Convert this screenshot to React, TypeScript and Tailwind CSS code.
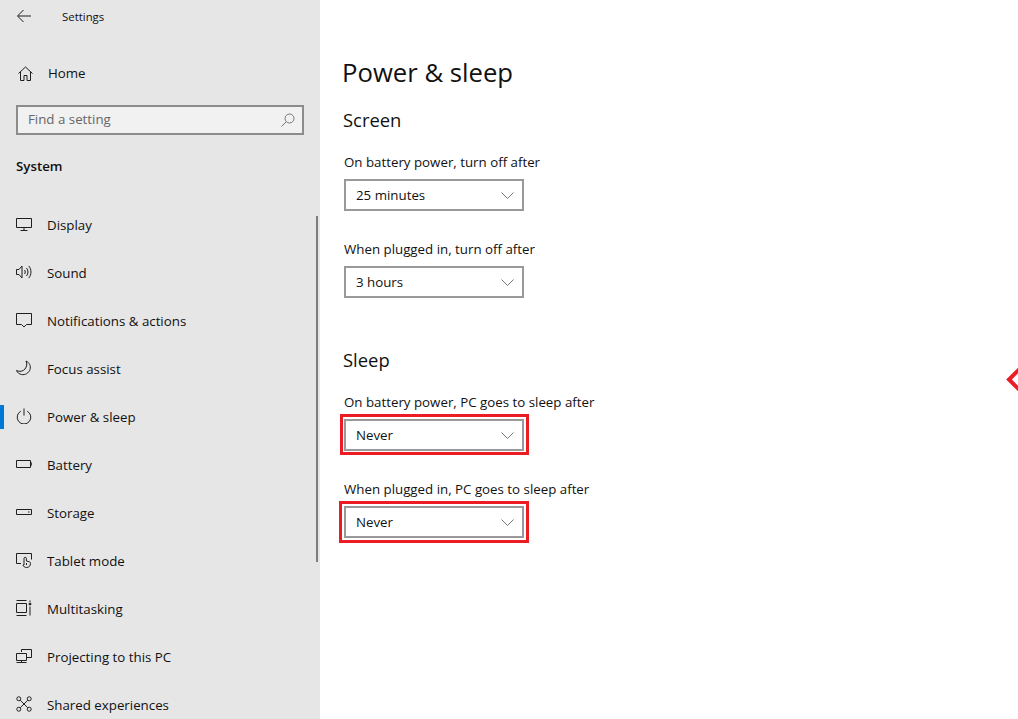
import React from 'react';

const stroke = { fill: 'none', stroke: '#1f1f1f', strokeWidth: 1 };

const Icon: React.FC<{ children: React.ReactNode }> = ({ children }) => (
  <svg width="16" height="16" viewBox="0 0 16 16" className="shrink-0 -mt-0.5" {...stroke}>
    {children}
  </svg>
);

const navItems: { label: string; icon: React.ReactNode; active?: boolean }[] = [
  { label: 'Display', icon: <Icon><path d="M.5 2.500h15v9H.5zM8 11.500v3M4.500 14.500h7" /></Icon> },
  { label: 'Sound', icon: <Icon><path d="M.5 5.500h2.500l3-3.500v12l-3-3.500H.5zM8.500 6c1 1.200 1 2.800 0 4M10.500 4c2 2.400 2 5.600 0 8M12.800 2c2.900 3.600 2.900 8.400 0 12" /></Icon> },
  { label: 'Notifications & actions', icon: <Icon><path d="M.5 1.500h15v11h-5L8 15l-2.500-2.500h-5z" /></Icon> },
  { label: 'Focus assist', icon: <Icon><path d="M10 1c3.500 1.500 5 5 4 8.500-1 3.500-5 5.800-8.500 5C3.300 14 1.500 12.800.5 10.500c3 1.500 6.500 1 8.500-1.500 2-2.500 2.300-5.500 1-8z" /></Icon> },
  { label: 'Power & sleep', active: true, icon: <Icon><path d="M4.800 3.200a6.800 6.800 0 1 0 6.400 0M8 .5v7" /></Icon> },
  { label: 'Battery', icon: <Icon><path d="M.5 4.500h14v7H.5zM14.500 7h1.500v2h-1.500" /></Icon> },
  { label: 'Storage', icon: <Icon><path d="M.5 5.500h15v5H.5zM12 8h1.500" /></Icon> },
  { label: 'Tablet mode', icon: <Icon><path d="M5 11.500H.5v-10h15v6M8 13V6.500a1.200 1.200 0 0 1 2.400 0V9l3 .8c.8.3 1.100.8 1.100 1.500 0 2.500-1.500 4.200-3.800 4.200-2 0-3.500-1.200-3.700-2.500zM10.500 11v2" /></Icon> },
  { label: 'Multitasking', icon: <Icon><path d="M.5.500h10M.5 15.500h10M.5 3.500h10v9H.5zM14 .5v1.500M14 6.500v9" /><circle cx="14" cy="4" r="1" fill="#1f1f1f" /></Icon> },
  { label: 'Projecting to this PC', icon: <Icon><path d="M5.500 4V1.500h10v8h-5M.5 5.500h10v7H.5zM.5 14.500h10M5.500 12.500v2" /></Icon> },
  { label: 'Shared experiences', icon: <Icon><circle cx="2.800" cy="2.800" r="2" /><circle cx="13.200" cy="2.800" r="2" /><circle cx="2.800" cy="13.200" r="2" /><circle cx="13.200" cy="13.200" r="2" /><path d="M4.300 4.300l7.400 7.400M11.700 4.300l-7.400 7.400" /></Icon> },
];

const Dropdown: React.FC<{ value: string }> = ({ value }) => (
  <div className="w-[180px] h-8 border-2 border-[#999999] bg-white flex items-center justify-between pl-[10px] pr-2 text-[13.3px] text-[#111111]">
    <span className="mt-0.5">{value}</span>
    <svg width="13" height="7" viewBox="0 0 13 7" fill="none" stroke="#777777" strokeWidth="1">
      <path d="M.5.500L6.500 6.500l6-6" />
    </svg>
  </div>
);

const Field: React.FC<{ label: string; value: string; highlight?: string }> = ({ label, value, highlight }) => (
  <div>
    <p className="h-[19px] leading-[19px] text-[13.3px] text-[#111111] mb-[7px]">{label}</p>
    <div className="relative w-[180px]">
      <Dropdown value={value} />
      {highlight && <div className={`absolute border-[3px] border-[#ed1c24] ${highlight}`} />}
    </div>
  </div>
);

export default function App() {
  return (
    <div
      className="relative w-[1018px] h-[719px] overflow-hidden bg-white flex"
      style={{ fontFamily: '"Open Sans", "Noto Sans", sans-serif' }}
    >
      {/* Sidebar */}
      <aside className="relative w-80 shrink-0 bg-[#e6e6e6] text-[#111111]">
        <div className="h-8 pt-px flex items-center pl-4">
          <svg width="16" height="14" viewBox="0 0 16 14" fill="none" stroke="#1f1f1f" strokeWidth="1" className="mr-[30px] -mt-0.5">
            <path d="M15 7H2M7.500 1L1.500 7l6 6" />
          </svg>
          <span className="text-[11.4px]">Settings</span>
        </div>
        <div className="h-12 mt-[17px] flex items-center pl-[18px] gap-[15px] text-[13.3px]">
          <svg width="15" height="15" viewBox="0 0 15 15" fill="none" stroke="#1f1f1f" strokeWidth="1">
            <path d="M.5 7.500L7.500 1l7 6.500M2.500 6v8.500h3.500V9.500h3v5h3.500V6" />
          </svg>
          <span className="mt-px">Home</span>
        </div>
        <div className="mx-4 mt-2 h-[30px] border-2 border-[#8c8c8c] bg-[#f1f1f1] flex items-center justify-between pl-[10px] pr-[7px] text-[13.3px] text-[#666666]">
          <span className="-mt-px">Find a setting</span>
          <svg width="14" height="14" viewBox="0 0 14 14" fill="none" stroke="#777777" strokeWidth="1">
            <circle cx="8.500" cy="5.500" r="4.500" />
            <path d="M5.500 8.500L.5 13.500" />
          </svg>
        </div>
        <div className="h-5 mt-[21px] pl-4 leading-5 text-[13.3px] font-semibold">System</div>
        <nav className="mt-[25px]">
          {navItems.map(item => (
            <div key={item.label} className="relative h-12 flex items-center pl-4 gap-[15px] text-[13.3px]">
              {item.active && <div className="absolute left-0 top-3 w-1 h-6 bg-[#0078d7]" />}
              {item.icon}
              <span className="mt-0.5">{item.label}</span>
            </div>
          ))}
        </nav>
        {/* Scrollbar thumb */}
        <div className="absolute left-[316px] top-[216px] w-0.5 h-[346px] bg-[#7d7d7d]" />
      </aside>

      {/* Content */}
      <main className="pl-[22px] text-[#111111]">
        <h1 className="mt-[54px] h-[38px] leading-[38px] text-[25.7px]">Power &amp; sleep</h1>
        <section className="pl-[2px]">
          <h2 className="mt-[14px] h-7 leading-7 text-[18.4px] -ml-px">Screen</h2>
          <div className="mt-[19px] flex flex-col gap-[29px]">
            <Field label="On battery power, turn off after" value="25 minutes" />
            <Field label="When plugged in, turn off after" value="3 hours" />
          </div>
          <h2 className="mt-[48px] h-7 leading-7 text-[18.4px] -ml-px">Sleep</h2>
          <div className="mt-[19px] flex flex-col gap-[29px]">
            <Field label="On battery power, PC goes to sleep after" value="Never" highlight="-left-1 -right-[5px] -top-[5px] -bottom-1" />
            <Field label="When plugged in, PC goes to sleep after" value="Never" highlight="-left-[5px] -right-[5px] -top-[5px] -bottom-[5px]" />
          </div>
        </section>
      </main>

      {/* Red annotation arrow, cut off at the window edge */}
      <svg width="12" height="26" viewBox="0 0 12 26" className="absolute left-[1006px] top-[367px]" fill="none" stroke="#ed1c24" strokeWidth="4">
        <path d="M14 1.500L3 12.500l11 11" />
      </svg>
    </div>
  );
}
